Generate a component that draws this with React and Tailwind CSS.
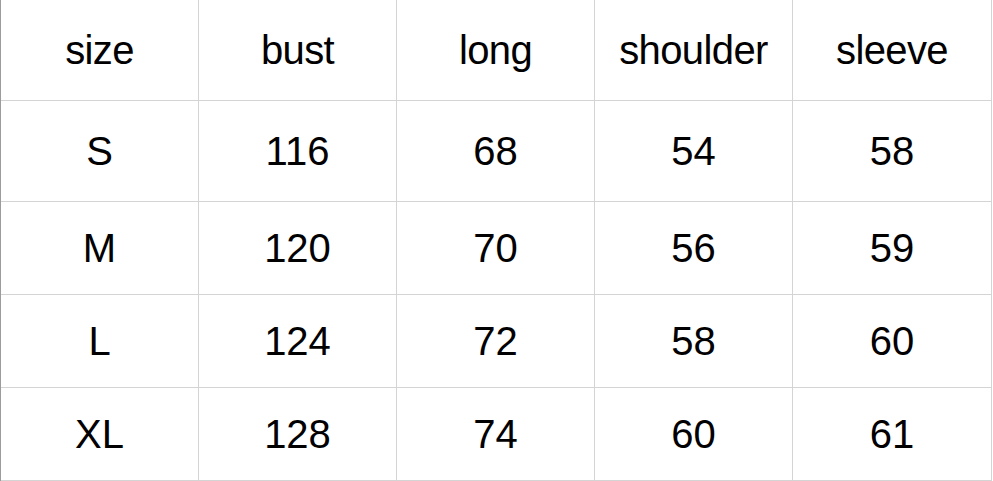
const headers = ['size', 'bust', 'long', 'shoulder', 'sleeve']

const rows = [
  ['S', '116', '68', '54', '58'],
  ['M', '120', '70', '56', '59'],
  ['L', '124', '72', '58', '60'],
  ['XL', '128', '74', '60', '61'],
]

const rowHeights = ['h-[101px]', 'h-[101px]', 'h-[93px]', 'h-[93px]', 'h-[93px]']
const colWidths = ['w-[198px]', 'w-[198px]', 'w-[198px]', 'w-[198px]', 'w-[199px]']

function Row({ cells, height, extra = '' }) {
  return (
    <div className={`flex ${height} ${extra}`}>
      {cells.map((c, i) => (
        <div
          key={i}
          className={`${colWidths[i]} shrink-0 flex items-center justify-center border-r border-b border-[#d4d4d4]`}
        >
          {c}
        </div>
      ))}
    </div>
  )
}

export default function App() {
  return (
    <div className="w-[993px] h-[481px] bg-white overflow-hidden">
      <div
        className="w-[992px] border-l border-[#9c9c9c] text-[40px] text-black"
        style={{ fontFamily: '"Liberation Sans", Arial, sans-serif' }}
      >
        <Row cells={headers} height={rowHeights[0]} extra="tracking-[-0.6px]" />
        {rows.map((r, i) => (
          <Row key={i} cells={r} height={rowHeights[i + 1]} />
        ))}
      </div>
    </div>
  )
}
